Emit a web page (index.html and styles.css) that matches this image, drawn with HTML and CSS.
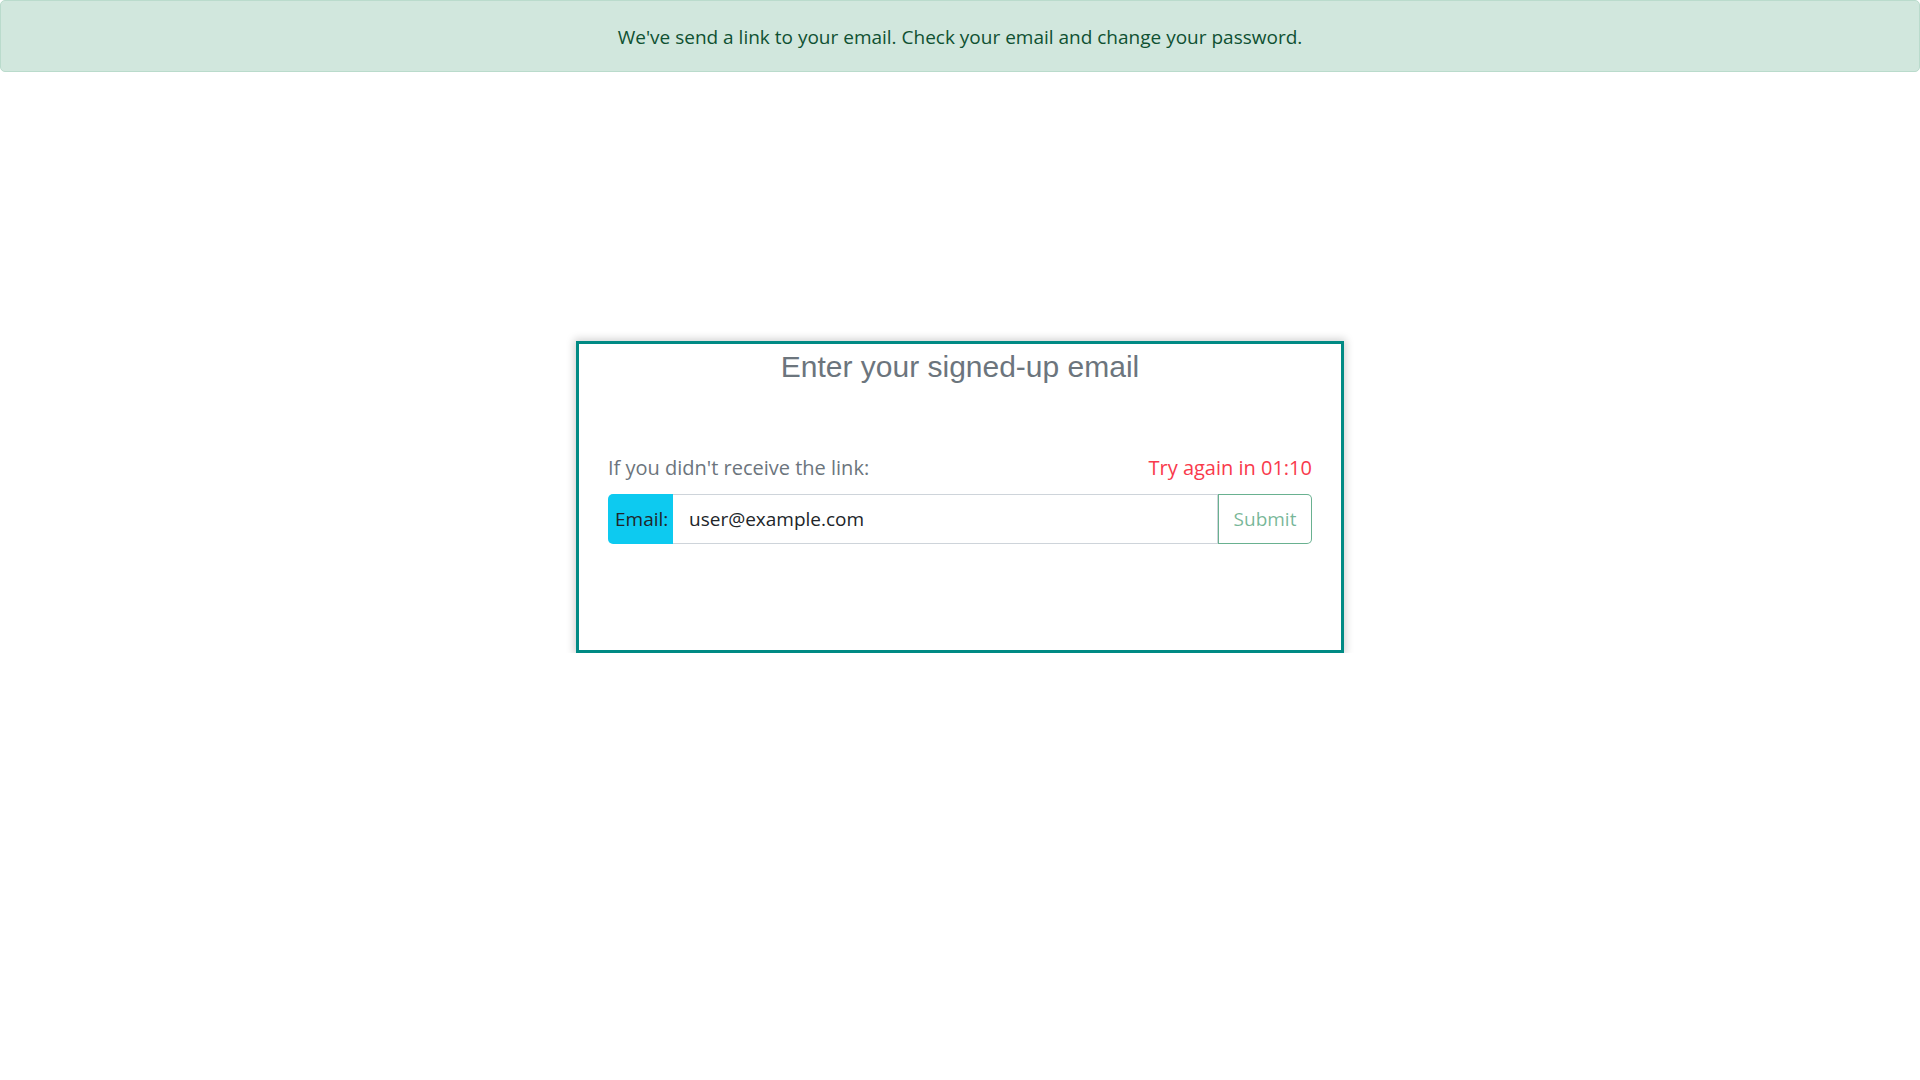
FILE: index.html
```html
<!DOCTYPE html>
<html lang="en">
<head>
<meta charset="utf-8">
<title>Reset password</title>
<link rel="stylesheet" href="styles.css">
</head>
<body>
<div class="alert">We've send a link to your email. Check your email and change your password.</div>
<main class="page">
  <section class="card">
    <h4 class="card-title">Enter your signed-up email</h4>
    <div class="resend-row">
      <span class="hint">If you didn't receive the link:</span>
      <span class="timer">Try again in 01:10</span>
    </div>
    <form class="input-group" onsubmit="return false">
      <span class="input-label">Email:</span>
      <input class="input" type="email" value="user@example.com">
      <button class="btn-submit" type="submit" disabled>Submit</button>
    </form>
  </section>
</main>
</body>
</html>
```
FILE: styles.css
```css
* { box-sizing: border-box; }
html, body { margin: 0; padding: 0; background: #fff; }
body {
  font-family: "Open Sans", "Noto Sans", sans-serif;
  font-size: 20px;
  line-height: 1.5;
  color: #212529;
}
.alert {
  background: #d1e7dd;
  color: #0f5132;
  border: 1px solid #badbcc;
  border-radius: 5px;
  padding: 22px 20px 18px;
  text-align: center;
  height: 72px;
  font-size: 19px;
}
.page {
  display: flex;
  justify-content: center;
  padding-top: 269px;
}
.card {
  width: 768px;
  height: 312px;
  border: 3px solid #008a84;
  box-shadow: 0 0 8px 2px rgba(0,0,0,0.18);
  padding: 5px 29px 0 29px;
  background: #fff;
}
.card-title {
  margin: 0;
  font-family: "Liberation Sans", Arial, sans-serif;
  font-weight: 400;
  font-size: 30px;
  line-height: 36px;
  color: #6c757d;
  text-align: center;
}
.resend-row {
  display: flex;
  justify-content: space-between;
  margin-top: 68px;
  line-height: 30px;
}
.hint { color: #6c757d; }
.timer { color: #f93a4c; }
.input-group {
  display: flex;
  margin-top: 11px;
  height: 50px;
}
.input-label {
  display: flex;
  align-items: center;
  padding: 0 7px;
  width: 65px;
  background: #0dcaf0;
  color: #212529;
  border-radius: 5px 0 0 5px;
  font-size: 19px;
}
.input {
  flex: 1;
  min-width: 0;
  border: 1px solid #ced4da;
  border-left: 0;
  padding: 0 16px;
  font: inherit;
  font-size: 19px;
  color: #212529;
  outline: none;
}
.btn-submit {
  width: 94px;
  border: 1px solid rgba(25,135,84,0.65);
  background: #fff;
  color: rgba(25,135,84,0.6);
  border-radius: 0 5px 5px 0;
  font: inherit;
  font-size: 19px;
  padding: 0;
}
```
